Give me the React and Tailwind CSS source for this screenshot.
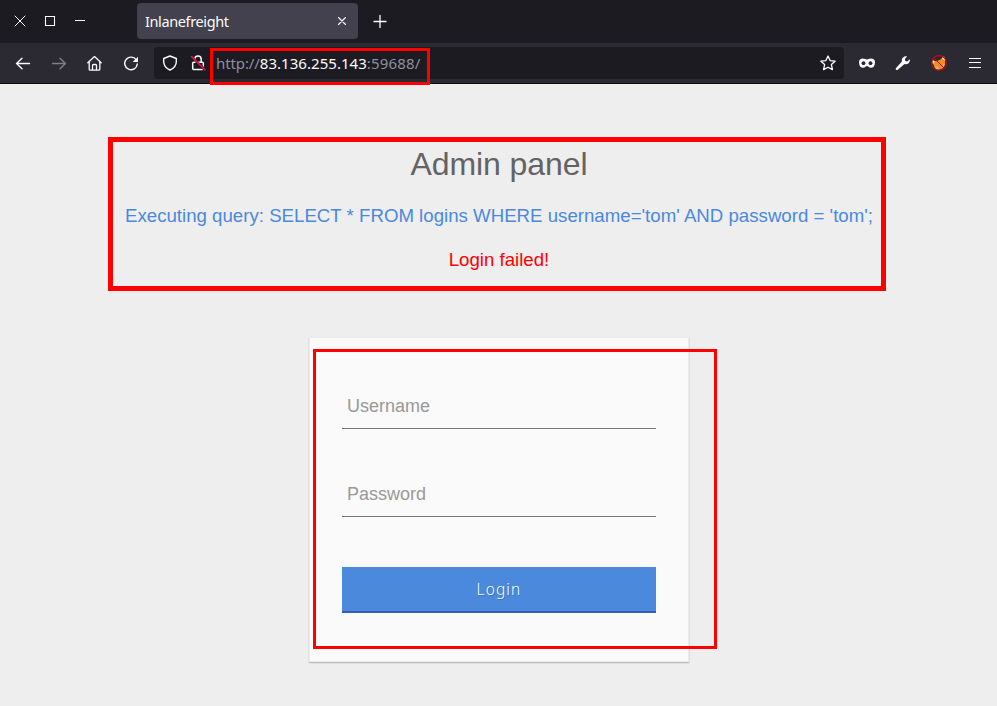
import React from "react";

function Icon({ children, className = "", size = 16 }) {
  return (
    <svg
      width={size}
      height={size}
      viewBox="0 0 16 16"
      fill="none"
      stroke="#fbfbfe"
      strokeWidth="1.3"
      strokeLinecap="round"
      strokeLinejoin="round"
      className={`shrink-0 ${className}`}
    >
      {children}
    </svg>
  );
}

function TabStrip() {
  return (
    <div className="flex h-[43px] bg-[#1c1b22] pt-[3px]">
      <div className="flex h-9 w-[137px] items-center gap-[14px] pl-3">
        <Icon><path d="M3 3l10 10M13 3l-10 10" strokeWidth="1" /></Icon>
        <Icon><path d="M3.500 3.500h9v9h-9z" strokeWidth="1.1" strokeLinejoin="miter" /></Icon>
        <Icon><path d="M3 7.500h10" strokeWidth="1" strokeLinecap="butt" /></Icon>
      </div>
      <div className="flex h-9 w-[221px] items-center justify-between rounded bg-[#42414d] pr-2 pl-2">
        <span className="text-[14.5px] leading-5 tracking-[-0.38px] text-[#fbfbfe]">Inlanefreight</span>
        <Icon><path d="M4.500 4.500l7 7M11.500 4.500l-7 7" strokeWidth="1.1" /></Icon>
      </div>
      <div className="flex h-9 w-[43px] items-center justify-center">
        <Icon><path d="M8 2.500v12M2 8.500h12" strokeWidth="1.3" /></Icon>
      </div>
    </div>
  );
}

function Toolbar() {
  return (
    <div className="flex h-[41px] items-center border-b border-[#0c0c0d] bg-[#2b2a33] pl-[15px]">
      <div className="flex w-[139px] gap-5">
        <Icon><path d="M1.500 8.500h13M7 3.200L1.500 8.500 7 13.800" strokeWidth="1.4" /></Icon>
        <Icon className="opacity-40"><path d="M1.500 8.500h13M9 3.200L14.500 8.500 9 13.800" strokeWidth="1.4" /></Icon>
        <Icon><path d="M.8 7.700L7.500 1.600l6.700 6.100M2.200 7v7.200q0 1 1 1h8.600q1 0 1-1V7M5.500 15v-4.500q0-1 1-1h2q1 0 1 1V15" /></Icon>
        <Icon><path d="M13.500 5.300A6.300 6.300 0 1 0 14.300 9" strokeWidth="1.4" /><path d="M15 1.700v5.300H9.700z" fill="#fbfbfe" stroke="none" /></Icon>
      </div>
      <div className="flex h-8 w-[690px] items-center rounded bg-[#1c1b22] pr-2 pl-2">
        <Icon><path d="M8 1L14.300 3.500v3.200c0 3.700-2.500 6.500-6.300 8.300-3.800-1.800-6.300-4.600-6.300-8.300V3.500z" strokeWidth="1.4" /></Icon>
        <Icon className="ml-3">
          <path d="M2.700 8.300q0-1 1-1h8.600q1 0 1 1v5.200q0 1-1 1H3.700q-1 0-1-1zM4.800 7V4.200a3.200 3.200 0 0 1 6.400 0V7" strokeWidth="1.500" />
          <path d="M2.500 1.700l13.300 13" stroke="#1c1b22" strokeWidth="1.200" />
          <path d="M1.300 2.600l13.300 13" stroke="#1c1b22" strokeWidth="1.200" />
          <path d="M1.600 1.600l13.500 13.400" stroke="#f0104a" strokeWidth="1.500" />
        </Icon>
        <span className="ml-[10px] grow text-[15px] leading-5 text-[#8f8f9d]">
          <span className="tracking-[-0.1px]">http://</span>
          <span className="tracking-[0.04px] text-[#fbfbfe]">83.136.255.143</span>
          <span className="tracking-[0.15px]">:59688/</span>
        </span>
        <Icon><path d="M8 1l2.100 4.600 5 .6-3.700 3.400 1 5L8 12.200l-4.400 2.400 1-5L.9 6.200l5-.6z" /></Icon>
      </div>
      <div className="flex items-center gap-5 pl-[15px]">
        <Icon>
          <path fillRule="evenodd" d="M0 7.500C0 4.700 1.500 3.600 4 3.600c2 0 2.800.9 4 .9s2-.9 4-.9c2.500 0 4 1.100 4 3.900 0 3.500-1.700 5.300-4 5.300-2.200 0-3-1.700-4-1.700s-1.800 1.700-4 1.700c-2.300 0-4-1.800-4-5.300zM2.300 8.200c.6 1.200 1.300 1.900 2.200 1.900s1.700-.7 2.100-1.900C6 6.800 5.400 6.200 4.500 6.200S2.900 6.900 2.300 8.200zm7.100 0c.4 1.200 1.200 1.900 2.100 1.900s1.600-.7 2.200-1.900c-.6-1.300-1.300-2-2.200-2S10 6.800 9.400 8.200z" fill="#fbfbfe" stroke="none" />
        </Icon>
        <Icon><path d="M14.900 4.200l-2.700 2.200-1.900-.4-.4-1.900 2.200-2.800A4.300 4.300 0 0 0 6.900 6.500L1.100 13.100a1.200 1.200 0 0 0 1.700 1.700l6.700-5.700a4.300 4.300 0 0 0 5.400-4.900z" fill="#fbfbfe" stroke="none" /></Icon>
        <Icon>
          <path d="M1.500 5.500l4 .8 4-1.800L12.500 1.500l1.600 4-.3 4.500-2.300 3.500-4.500 1.500-3.500-2.500-1-3z" fill="#ee8f22" stroke="none" />
          <path d="M1 5l2.500 1-1.500 3.500zM11 3.200l2-1.900 1.500 4.200-1.500-.5z" fill="#fff4ea" stroke="none" />
          <path d="M4 11.500l2.500.2 1.500 1.800-1.500 1.200-2-1zM12 9.500l2-1-1 3-1.500.7z" fill="#c9b5a2" stroke="none" />
          <circle cx="8" cy="8" r="7.400" stroke="#c80808" strokeWidth="1.100" />
          <path d="M2.800 2.800l10.400 10.400" stroke="#c80808" strokeWidth="1" />
        </Icon>
        <Icon><path d="M2 3.500h12M2 7.500h12M2 12.500h12" strokeWidth="1.200" strokeLinecap="butt" /></Icon>
      </div>
    </div>
  );
}

const field =
  "block w-full border-b border-[#757575] bg-transparent pr-[5px] pb-[2px] pl-[5.5px] text-lg text-[#444] outline-none placeholder:text-[#999] placeholder:opacity-100";

export default function App() {
  return (
    <div className="relative h-[706px] w-[997px] overflow-hidden bg-[#eeeeee] font-['Noto_Sans',sans-serif]">
      <TabStrip />
      <Toolbar />
      <main className="flex flex-col items-center pt-[60px] font-['Liberation_Sans',Arial,sans-serif]">
        <h1 className="pl-px text-[32px] leading-10 tracking-[-0.1px] text-[#636363]">Admin panel</h1>
        <p className="mt-[18px] pl-px text-[18.67px] leading-7 whitespace-nowrap text-[#4a89dc]">
          Executing query: SELECT * FROM logins WHERE username='tom' AND password = 'tom';
        </p>
        <p className="mt-4 pl-px text-[18.67px] leading-7 text-[#ff0000]">Login failed!</p>
        <form className="mt-[63px] h-[325px] w-[380px] border border-[#ebebeb] bg-[#fafafa] px-8 pt-12 shadow-[0_1px_1px_0_rgba(0,0,0,0.15),0_1px_2px_0_rgba(0,0,0,0.1)]">
          <input className={`h-[43px] ${field}`} placeholder="Username" />
          <input className={`mt-[45px] h-[43px] ${field}`} placeholder="Password" />
          <button
            type="button"
            className="mt-[50px] block h-[46px] w-full border-b-2 border-[#3160b6] bg-[#4a89dc] pt-[2px] pl-px font-['Noto_Sans',sans-serif] text-[15.5px] font-light tracking-[1.1px] text-white [text-shadow:1px_1px_0_rgba(0,0,0,0.2)]"
          >
            Login
          </button>
        </form>
      </main>
      <div className="absolute top-[48px] left-[210px] h-[37px] w-[220px] border-[3px] border-[#ff0000]" />
      <div className="absolute top-[137px] left-[108px] h-[154px] w-[778px] border-[5px] border-[#ff0000]" />
      <div className="absolute top-[349px] left-[313px] h-[300px] w-[404px] border-[3px] border-[#ff0000]" />
    </div>
  );
}
